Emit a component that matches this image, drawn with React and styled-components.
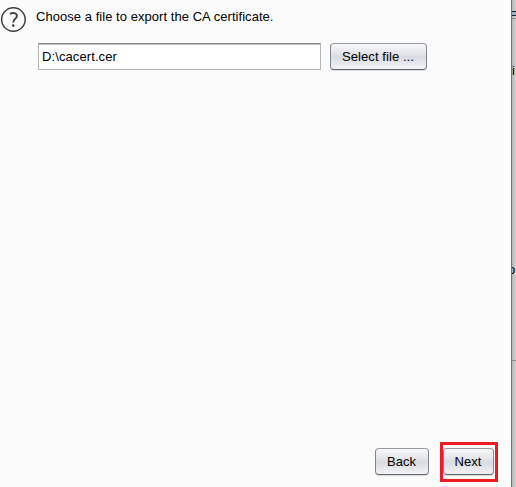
import React from "react";
import styled, { createGlobalStyle } from "styled-components";

const Global = createGlobalStyle`
  * { box-sizing: border-box; }
  body { margin: 0; overflow: hidden; font-family: "Liberation Sans", Arial, sans-serif; font-size: 13px; color: #000; }
`;

const Window = styled.div`
  display: grid;
  grid-template-columns: 511px 5px;
  width: 516px;
  height: 487px;
  overflow: hidden;
`;

const Dialog = styled.main`
  display: flex;
  flex-direction: column;
  justify-content: space-between;
  background: #fbfbfb;
`;

const Content = styled.section`
  display: grid;
  grid-template-columns: 26px 1fr;
  column-gap: 10px;
  padding-top: 7px;
`;

const HelpIcon = styled.svg`
  display: block;
  width: 26px;
  height: 26px;
`;

const Prompt = styled.p`
  margin: 2px 0 0;
  height: 16px;
  line-height: 16px;
  letter-spacing: 0.045px;
  white-space: nowrap;
`;

const FileRow = styled.div`
  display: flex;
  gap: 9px;
  margin: 18px 0 0 2px;
`;

const FileInput = styled.input`
  width: 283px;
  height: 27px;
  padding: 0 3px;
  border: 1px solid #b5b5b5;
  border-top-color: #858585;
  border-radius: 0;
  outline: 0;
  background: #fff;
  box-shadow: inset 0 1px #c4c4c4;
  color: #000;
  font: inherit;
  letter-spacing: 0.1px;
`;

const Button = styled.button`
  width: ${({ $width }) => $width}px;
  height: 27px;
  padding: 0 1px 0 0;
  border: 1px solid #81868c;
  border-top-color: #999ca0;
  border-bottom-color: #62676c;
  border-radius: 4px;
  background: linear-gradient(#f7f8fa 0%, #e5e7eb 35%, #d8dbe1 52%, #e4e6ea 75%, #f1f3f6 100%);
  box-shadow: 0 1px #d9dadd;
  color: #000;
  font: inherit;
  letter-spacing: 0.08px;
  line-height: 15px;
  white-space: nowrap;
`;

const Actions = styled.footer`
  display: flex;
  align-items: flex-start;
  justify-content: flex-end;
  gap: 11px;
  padding: 0 13px 5px 0;

  > ${Button} { margin-top: 6px; }
`;

const Highlight = styled.div`
  width: 58px;
  height: 40px;
  padding: 3px 0 0;
  border: 3px solid #ed1c24;
`;

const Backdrop = styled.aside`
  position: relative;
  overflow: hidden;
  border-left: 1px solid #707070;
  background: linear-gradient(90deg, #b6b6b6, #d3d3d3);
`;

const BackdropBar = styled.div`
  position: absolute;
  top: 11px;
  left: 0;
  width: 4px;
  height: 5px;
  border: solid #142033;
  border-width: 1px 0;
  background: #a1b1bf;
`;

const BackdropLine = styled.div`
  position: absolute;
  top: ${({ $top }) => $top}px;
  left: 0;
  width: 4px;
  height: 1px;
  background: #858a91;
`;

const BackdropText = styled.span`
  position: absolute;
  top: ${({ $top }) => $top}px;
  left: ${({ $left }) => $left}px;
  line-height: 16px;
`;

export default function App() {
  return (
    <>
      <Global />
      <Window>
        <Dialog>
          <Content>
            <HelpIcon viewBox="0 0 26 26" fill="none" stroke="#404040" aria-label="Help">
              <circle cx="13.4" cy="12.5" r="11.8" strokeWidth="1.5" />
              <path d="M10 6.9C12.6 5.4 16.9 5.7 16.9 8.9C16.9 11.8 13.2 11.7 13.2 15.4" strokeWidth="1.8" />
              <circle cx="13.2" cy="18.6" r="1.3" fill="#404040" stroke="none" />
            </HelpIcon>
            <div>
              <Prompt>Choose a file to export the CA certificate.</Prompt>
              <FileRow>
                <FileInput aria-label="Certificate file" defaultValue="D:\cacert.cer" />
                <Button $width={97}>Select file ...</Button>
              </FileRow>
            </div>
          </Content>
          <Actions>
            <Button $width={54}>Back</Button>
            <Highlight>
              <Button $width={51}>Next</Button>
            </Highlight>
          </Actions>
        </Dialog>
        <Backdrop>
          <BackdropBar />
          <BackdropLine $top={18} />
          <BackdropText $top={63} $left={0}>i</BackdropText>
          <BackdropText $top={262} $left={-4}>o</BackdropText>
          <BackdropLine $top={360} />
        </Backdrop>
      </Window>
    </>
  );
}
